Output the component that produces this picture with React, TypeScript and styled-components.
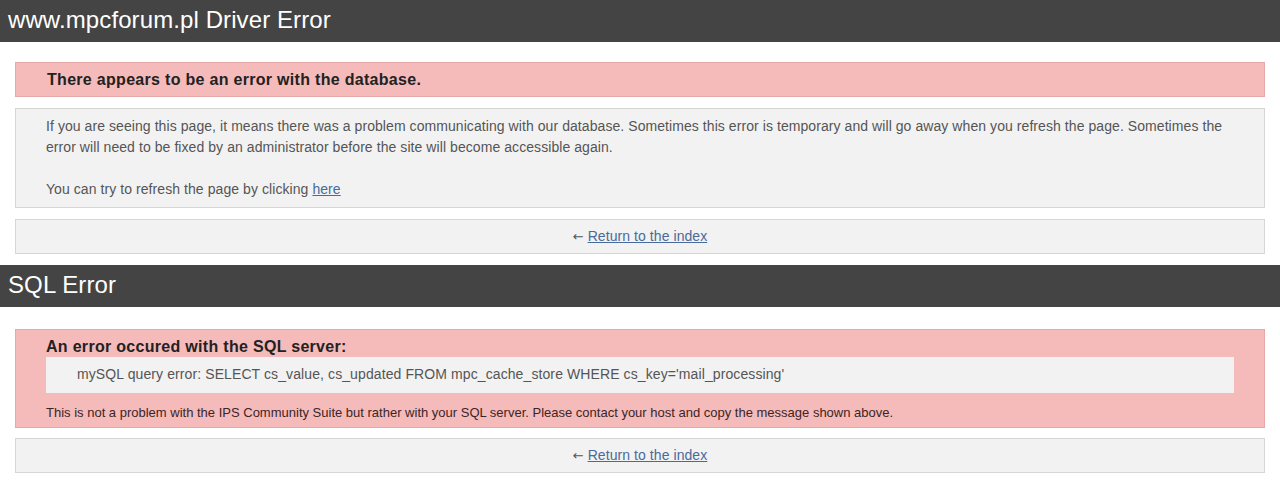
import React from "react";
import styled, { createGlobalStyle } from "styled-components";

const GlobalStyle = createGlobalStyle`
  body {
    margin: 0;
    background: #fff;
    font-family: "Liberation Sans", Arial, sans-serif;
    color: #555;
  }
`;

function App() {
  return (
    <Page>
      <GlobalStyle />
      <Header>www.mpcforum.pl Driver Error</Header>
      <ErrorBox $top={20}>
        <ErrorTitle>There appears to be an error with the database.</ErrorTitle>
      </ErrorBox>
      <InfoBox>
        If you are seeing this page, it means there was a problem communicating
        with our database. Sometimes this error is temporary and will go away
        when you refresh the page. Sometimes the error will need to be fixed by
        an administrator before the site will become accessible again.
        <br />
        <br />
        You can try to refresh the page by clicking <Link href="#">here</Link>
      </InfoBox>
      <ReturnBox>
        <Arrow>←</Arrow> <Link href="#">Return to the index</Link>
      </ReturnBox>
      <Header>SQL Error</Header>
      <SqlBox $top={22}>
        <SqlTitle>An error occured with the SQL server:</SqlTitle>
        <QueryBox>
          mySQL query error: SELECT cs_value, cs_updated FROM mpc_cache_store
          WHERE cs_key='mail_processing'
        </QueryBox>
        <SqlNote>
          This is not a problem with the IPS Community Suite but rather with
          your SQL server. Please contact your host and copy the message shown
          above.
        </SqlNote>
      </SqlBox>
      <ReturnBox>
        <Arrow>←</Arrow> <Link href="#">Return to the index</Link>
      </ReturnBox>
    </Page>
  );
}

const Page = styled.div`
  display: flex;
  flex-direction: column;
`;

const Header = styled.h1`
  margin: 0;
  height: 42px;
  line-height: 40px;
  padding: 0 8px;
  background: #444;
  color: #fff;
  font-size: 24px;
  font-weight: normal;
  letter-spacing: 0.1px;
`;

const Box = styled.div`
  margin: 0 15px 11px;
  font-size: 14px;
  line-height: 21px;
  letter-spacing: 0.07px;
`;

const ErrorBox = styled(Box)<{ $top: number }>`
  margin-top: ${(p) => p.$top}px;
  background: #f5baba;
  border: 1px solid #e6a8a8;
  padding: 7px 31px 6px;
  color: #222;
`;

const ErrorTitle = styled.div`
  font-size: 16px;
  font-weight: bold;
  line-height: 20px;
  letter-spacing: 0.3px;
`;

const InfoBox = styled(Box)`
  background: #f2f2f2;
  border: 1px solid #d6d6d6;
  padding: 7px 30px 7px;
`;

const ReturnBox = styled(Box)`
  background: #f2f2f2;
  border: 1px solid #d6d6d6;
  padding: 6px 30px 6px;
  text-align: center;
`;

const Arrow = styled.span`
  font-family: "DejaVu Sans", sans-serif;
  font-size: 13px;
  color: #555;
`;

const Link = styled.a`
  color: #4a6a9c;
  text-decoration: underline;
`;

const SqlBox = styled(ErrorBox)`
  padding: 7px 30px 5px;
  margin-bottom: 10px;
`;

const SqlTitle = styled.div`
  font-size: 16px;
  font-weight: bold;
  line-height: 19px;
  letter-spacing: 0.3px;
  color: #222;
`;

const QueryBox = styled.div`
  margin-top: 1px;
  background: #f2f2f2;
  padding: 7px 31px 8px;
  font-size: 14px;
  line-height: 21px;
  letter-spacing: 0.1px;
  color: #555;
`;

const SqlNote = styled.div`
  margin-top: 11px;
  font-size: 13px;
  line-height: 18px;
  letter-spacing: 0;
  color: #3b2626;
`;

export default App;
